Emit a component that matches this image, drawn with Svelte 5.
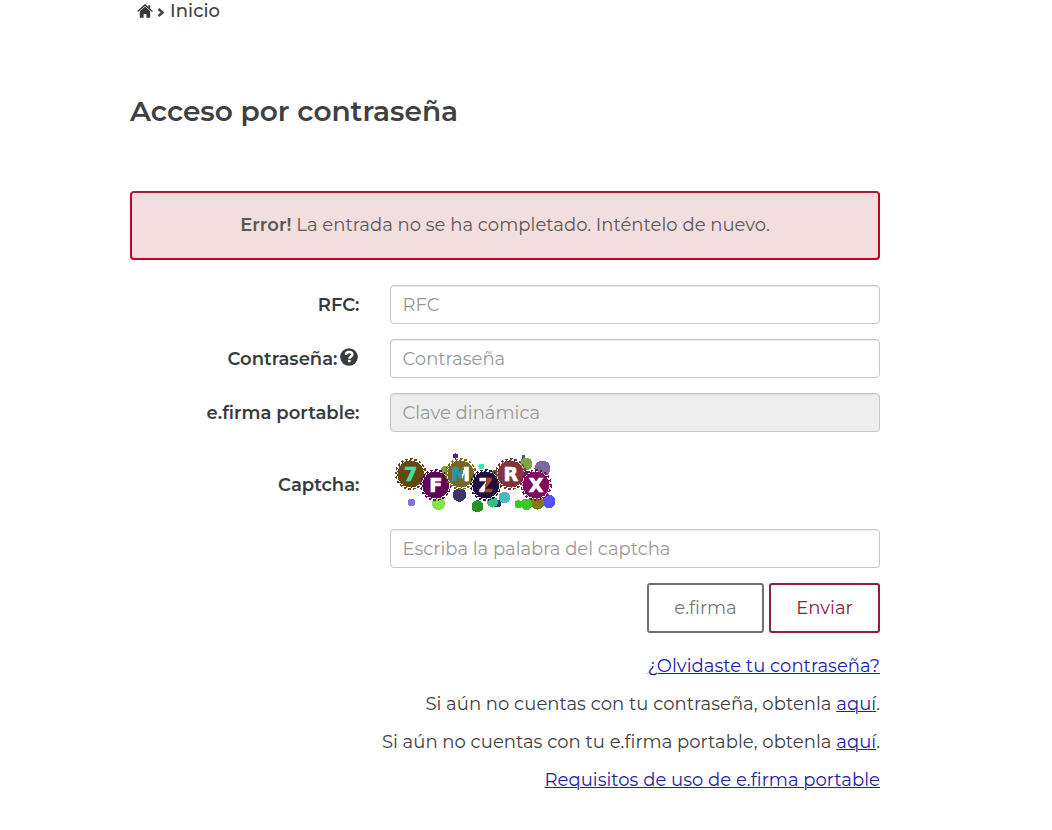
<script>
    let rfc = '';
    let password = '';
    let captcha = '';

    // Small dots scattered behind and below the captcha letters
    const dots = [
        { x: 65.5, y: 6, r: 2.6, color: '#5b1a8f' },
        { x: 91.5, y: 16.5, r: 3, color: '#35e8b4' },
        { x: 133.5, y: 7, r: 2, color: '#2f5f94' },
        { x: 136, y: 14, r: 6.5, color: '#7da544' },
        { x: 152.5, y: 18.5, r: 8, color: '#7d6ba0' },
        { x: 137, y: 25, r: 4.5, color: '#4a2592' },
        { x: 55.5, y: 21, r: 5, color: '#83a326' },
        { x: 105, y: 25, r: 5, color: '#236d43' },
        { x: 21.5, y: 52.5, r: 3.8, color: '#8670e2' },
        { x: 48.5, y: 53.5, r: 6.7, color: '#82e54c' },
        { x: 69.5, y: 45, r: 6.8, color: '#413366' },
        { x: 87.5, y: 56.3, r: 6, color: '#2a9420' },
        { x: 107, y: 53.5, r: 4, color: '#26309c' },
        { x: 102.5, y: 52, r: 5.5, color: '#34c278' },
        { x: 114.5, y: 47.5, r: 5.9, color: '#4bb9bd' },
        { x: 159, y: 51.5, r: 6.5, color: '#5750f2' },
        { x: 147.5, y: 53, r: 6.5, color: '#7b7d17' },
        { x: 128.5, y: 54.3, r: 4, color: '#36cb22' },
        { x: 136.5, y: 54.3, r: 5.8, color: '#36cb22' }
    ];

    const balls = [
        { char: '7', x: 20.7, y: 24, color: '#67470f', fill: '#35e8a4' },
        { char: 'F', x: 45.7, y: 35, color: '#60045a', fill: '#fff' },
        { char: 'M', x: 70.7, y: 24, color: '#766821', fill: 'url(#m-fill)' },
        { char: 'Z', x: 95.7, y: 35, color: '#21103f', fill: 'url(#z-fill)' },
        { char: 'R', x: 120.7, y: 24, color: '#80353a', fill: '#fff' },
        { char: 'X', x: 146, y: 35, color: '#800b5d', fill: '#fff' }
    ];
</script>

<div class="container">
    <div class="breadcrumb">
        <svg class="home" width="16" height="14" viewBox="0 0 16 14">
            <path d="M0.6 7.4 8 0.9 15.4 7.4" fill="none" stroke="#333739" stroke-width="1.3" />
            <path d="M2.8 7.2 8 2.5 13.2 7.2V13.7H9.4V10H6.6V13.7H2.8Z M11.3 1.2H13.2V5L11.3 3.4Z" fill="#333739" />
        </svg>
        <svg class="arrow" width="8" height="9" viewBox="0 0 8 9">
            <path d="M1.5 1 5.5 4.5 1.5 8" fill="none" stroke="#404344" stroke-width="2.5" />
        </svg>
        <span>Inicio</span>
    </div>

    <h2>Acceso por contraseña</h2>

    <div class="alert"><p><strong>Error!</strong> La entrada no se ha completado. Inténtelo de nuevo.</p></div>

    <form on:submit|preventDefault>
        <div class="form-group">
            <label for="rfc">RFC:</label>
            <input id="rfc" type="text" bind:value={rfc} placeholder="RFC" />
        </div>

        <div class="form-group">
            <label for="password">
                Contraseña:
                <svg class="help" width="18" height="18" viewBox="0 0 18 18">
                    <circle cx="9" cy="9" r="8.8" fill="#373b3d" />
                    <path d="M6 6.9C6 4.8 7.4 4 9.1 4C11 4 12.3 5 12.3 6.6C12.3 8.7 9.3 8.6 9.3 10.7" fill="none" stroke="#fff" stroke-width="2.5" />
                    <path d="M7.9 11.8H10.7V14.3H7.9Z" fill="#fff" />
                </svg>
            </label>
            <input id="password" type="password" bind:value={password} placeholder="Contraseña" />
        </div>

        <div class="form-group">
            <label for="portable">e.firma portable:</label>
            <input id="portable" type="text" placeholder="Clave dinámica" disabled />
        </div>

        <div class="form-group captcha-row">
            <label for="captcha">Captcha:</label>
            <svg class="captcha" width="170" height="67" viewBox="0 -3 170 67">
                <defs>
                    <linearGradient id="m-fill" x2="1" y2="0.25">
                        <stop offset="0.68" stop-color="#2794b0" />
                        <stop offset="0.68" stop-color="#fff" />
                    </linearGradient>
                    <linearGradient id="z-fill" x2="1" y2="0.2">
                        <stop offset="0.55" stop-color="#fff" />
                        <stop offset="0.55" stop-color="#a34c26" />
                    </linearGradient>
                </defs>
                {#each dots as dot}
                    <circle cx={dot.x} cy={dot.y} r={dot.r} fill={dot.color} shape-rendering="crispEdges" />
                {/each}
                {#each balls as ball}
                    <g shape-rendering="crispEdges">
                        <circle cx={ball.x} cy={ball.y} r="13.6" fill={ball.color} />
                        <circle cx={ball.x} cy={ball.y} r="14.9" fill="none" stroke={ball.color} stroke-width="1.8" stroke-dasharray="2.6 2" />
                        <circle cx={ball.x} cy={ball.y} r="13.6" fill="none" stroke="#fff" stroke-width="0.8" stroke-dasharray="2 2.27" />
                    </g>
                    <text x={ball.x} y={ball.y + 7} fill={ball.fill} stroke={ball.fill}>{ball.char}</text>
                {/each}
            </svg>
        </div>

        <div class="form-group">
            <input id="captcha" type="text" bind:value={captcha} placeholder="Escriba la palabra del captcha" />
        </div>

        <div class="buttons">
            <button type="button">e.firma</button>
            <button type="submit" class="send">Enviar</button>
        </div>
    </form>

    <div class="links">
        <div><a href="#forgot">¿Olvidaste tu contraseña?</a></div>
        <div>Si aún no cuentas con tu contraseña, obtenla <a href="#password">aquí</a>.</div>
        <div>Si aún no cuentas con tu e.firma portable, obtenla <a href="#portable">aquí</a>.</div>
        <div><a href="#requirements">Requisitos de uso de e.firma portable</a></div>
    </div>
</div>

<style>
    :global(body) {
        background: #fff;
    }

    .container {
        width: 750px;
        margin-left: 130px;
        font-family: Montserrat, Inter, sans-serif;
        font-size: 18px;
        font-weight: 400;
        font-variant-ligatures: none;
        color: #404041;
    }

    .breadcrumb {
        display: flex;
        align-items: center;
        height: 22px;
        padding-left: 7px;
        font-weight: 500;
        letter-spacing: 0.1px;
    }

    .breadcrumb span {
        line-height: 20px;
        padding-bottom: 1px;
    }

    .arrow {
        margin: 2px 5px 0 4px;
    }

    h2 {
        margin: 69px 0 60px;
        font-size: 28px;
        line-height: 40px;
        font-weight: 600;
        white-space: nowrap;
    }

    .alert {
        box-sizing: border-box;
        height: 69px;
        border: 2px solid #bb0626;
        border-top-color: #98203a;
        border-radius: 4px;
        background: #f2dede;
        color: #5a5757;
        text-align: center;
        white-space: nowrap;
    }

    .alert p {
        margin: 0;
        line-height: 64px;
        letter-spacing: 0.03px;
    }

    strong {
        font-weight: 600;
    }

    form {
        margin-top: 25px;
    }

    .form-group {
        display: flex;
        justify-content: flex-end;
        margin-bottom: 15px;
    }

    label {
        display: flex;
        flex: 1;
        align-items: center;
        justify-content: flex-end;
        margin-right: 30.5px;
        font-weight: 600;
        color: #383b3d;
        white-space: nowrap;
    }

    .help {
        margin: -3px 2px 0 2px;
    }

    input {
        box-sizing: border-box;
        width: 490px;
        height: 39px;
        padding: 0 11.5px;
        border: 1px solid #c5c7c9;
        border-radius: 4px;
        box-shadow: inset 0 1px 1px rgba(0, 0, 0, 0.075);
        background: #fff;
        font: inherit;
    }

    input::placeholder {
        color: #999;
        opacity: 1;
    }

    input:disabled {
        background: #eee;
    }

    .captcha-row label {
        padding-top: 8px;
    }

    .captcha {
        margin-right: 320px;
    }

    .captcha text {
        font: bold 19px "DejaVu Sans", sans-serif;
        text-anchor: middle;
        stroke-width: 0.7px;
    }

    .buttons {
        display: flex;
        justify-content: flex-end;
        gap: 5px;
    }

    button {
        width: 117px;
        height: 50px;
        padding: 0 0 1px;
        border: 2px solid #6f7271;
        border-radius: 3px;
        background: #fff;
        color: #777978;
        font: inherit;
        font-variant-ligatures: none;
    }

    .send {
        width: 111px;
        border-color: #8a2046;
        color: #8a2046;
    }

    .links {
        margin-top: 14px;
        line-height: 38px;
        letter-spacing: 0.03px;
        text-align: right;
        white-space: nowrap;
    }

    a {
        color: #1c22a6;
        text-decoration: underline;
        text-decoration-thickness: 1px;
        text-underline-offset: 1px;
    }
</style>
